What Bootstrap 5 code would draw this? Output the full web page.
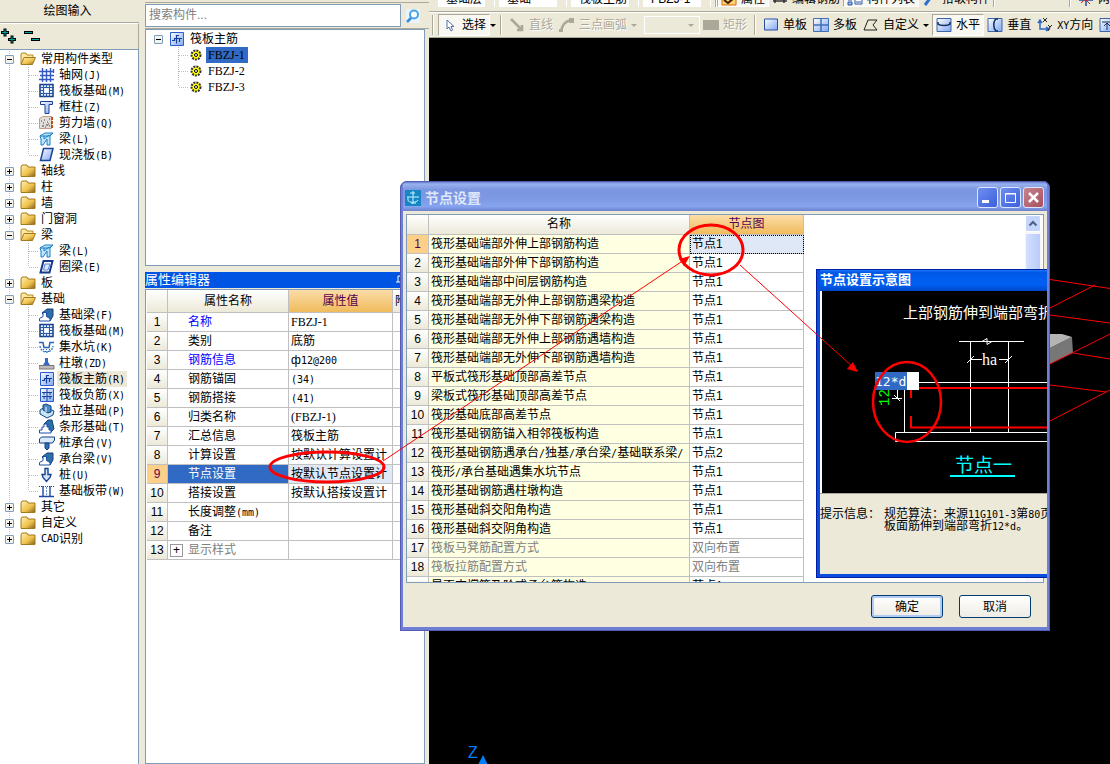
<!DOCTYPE html>
<html lang="zh-CN">
<head>
<meta charset="utf-8">
<meta name="viewport" content="width=device-width, initial-scale=1">
<title>节点设置</title>
<link href="https://cdn.jsdelivr.net/npm/bootstrap@5.3.0/dist/css/bootstrap.min.css" rel="stylesheet">
<script src="https://cdn.jsdelivr.net/npm/bootstrap@5.3.0/dist/js/bootstrap.bundle.min.js"></script>
<style>
:root{--face:#ece9d8;--edge:#7f9db9;--line:#c0c0c0;--shade:#aca899}
body{font-family:"Liberation Sans","Noto Sans CJK SC",sans-serif;font-size:12px;line-height:16px;color:#000;background:var(--face)}
button,input,select{font:inherit;color:inherit}
.m{font-family:"DejaVu Sans Mono","Noto Sans CJK SC",monospace;font-size:10px;line-height:10px}
.sf{font-family:"Liberation Serif",serif}
.ic{width:16px;height:16px;flex:none;display:block}
/* component type panel */
.side{width:139px;flex:none}
.side-head{height:23px;line-height:22px;border-bottom:1px solid var(--shade)}
.side-tools{height:26px;border-top:1px solid #fff;border-right:1px solid var(--shade)}
.side-tools svg{width:44px;height:24px}
.tree{background:#fff;border:1px solid var(--edge);border-left:0;border-bottom:0}
.tree ul,.parts ul{list-style:none;margin:0;padding:0}
.tree>ul{padding-top:1px}
.node{height:16px;display:flex;align-items:center;white-space:nowrap}
.tg{width:9px;height:9px;flex:none;border:1px solid var(--edge);border-radius:1px;background:#f4f3ee;position:relative;padding:0}
.tg::before,.tg.shut::after{content:"";position:absolute;left:1px;top:3px;width:5px;height:1px;background:#000}
.tg.shut::after{left:3px;top:1px;width:1px;height:5px}
.root{background:repeating-linear-gradient(#bbb 0 1px,transparent 1px 2px) 9px 0/1px 100% no-repeat}
.root:last-child{background-size:1px 8px}
.root>.node{padding-left:5px}
.root>.node .ic{margin:0 5px 0 6px}
.kid{padding-left:39px;background:repeating-linear-gradient(#bbb 0 1px,transparent 1px 2px) 28px 0/1px 100% no-repeat,repeating-linear-gradient(90deg,#bbb 0 1px,transparent 1px 2px) 29px 8px/9px 1px no-repeat}
.kid:last-child{background-size:1px 8px,9px 1px}
.kid .ic{margin-right:2px}
.kid span{padding:0 2px}
.kid .m{padding:0}
.kid .on{background:var(--face)}
/* middle column */
.mid{width:284px;flex:none;margin-left:6px}
.mid-top{height:3px;border-bottom:1px solid var(--shade)}
.find{height:26px;border-bottom:1px solid var(--shade);padding:1px 0}
.find input{width:256px;height:23px;border:1px solid var(--edge);padding:0 3px 2px;border-radius:0;background:#fff}
.find input::placeholder{color:#808080}
.find button{border:0;background:none;padding:0 4px}
.parts{height:237px;border:1px solid var(--edge);background:#fff;margin-right:4px;padding:1px 0 0 8px}
.parts .ic{margin:0 1px 0 6px}
.parts .kid{padding-left:34px;background-position:24px 0,25px 8px}
.parts .kid .ic{margin:0 2px 0 0}
.parts .kid span{padding:0 3px 0 2px}
.parts .kid .on{background:#316ac5}
.cap{height:16px;line-height:16px;font-size:13px;background:#0054e3;color:#fff;margin:6px 4px 0 0}
.prop{border:1px solid var(--edge);background:#fff;margin:1px 4px 0 0;padding-left:1px}
/* grids */
.sheet{border-collapse:separate;border-spacing:0;table-layout:fixed;margin:0}
.sheet th,.sheet td{height:19px;padding:0 2px;line-height:18px;border:solid var(--line);border-width:0 1px 1px 0;font-weight:400;white-space:nowrap;overflow:hidden;text-align:left}
.sheet thead th,.sheet tbody th{background:linear-gradient(#fff,#ece9d8);text-align:center}
.sheet thead th.hot{background:linear-gradient(#fbdca8,#f0bc5c);color:#5a0050}
.sheet tbody tr.cur th{background:#fdd08a;color:#5a0050}
.gray{color:#808080}
.prop .sheet{width:277px}
.prop .sheet thead th{height:23px}
.prop td:nth-child(2){padding-left:20px}
.prop .cur td:nth-child(2){background:#316ac5;color:#fff}
.prop .cur td:nth-child(3){background:#dfe8f6}
.blue{color:#00f}
.prop td.grp{padding-left:2px}
.plus{width:13px;height:13px;flex:none;border:1px solid #999;background:#fff;line-height:10px;padding:0;margin-right:5px;color:#000}
/* toolbars */
.bar1{height:12px;overflow:hidden;border-bottom:1px solid var(--shade);align-items:flex-end;padding:0 0 4px 9px;white-space:nowrap}
.bar1>*{flex:none}
.bar1 select{appearance:none;border:0;border-radius:0;height:16px;padding:0 8px;line-height:16px;margin-right:4px;background:linear-gradient(var(--face),var(--face)) right/9px 100% no-repeat #fff;border-right:1px solid #fff}
.bar1 .tb{height:16px}
.bar2{height:26px;border-top:1px solid #fff;border-bottom:1px solid var(--shade);padding:1px 0 1px 3px;white-space:nowrap;overflow:hidden}
.tb{border:0;background:none;padding:0 3px;height:22px;display:flex;align-items:center;gap:4px;flex:none}
.tb.down{background:#f8f7f1;border:1px solid var(--shade);border-color:var(--shade) #fff #fff var(--shade)}
.tb:disabled{color:var(--shade);text-shadow:1px 1px #fff}
.caret{width:0;height:0;border:3px solid transparent;border-top-color:currentColor;border-bottom:0;flex:none}
.vr2{width:2px;height:20px;flex:none;border-left:1px solid var(--shade);background:#fff}
.gap-bars{width:74px;background:var(--face)}
.bar2 select{appearance:none;width:56px;height:18px;flex:none;border:1px solid #fff;border-radius:0;background:var(--face)}
.combo{position:relative}
.combo .caret{position:absolute;right:6px;top:8px;color:var(--shade)}
.view{background:#000;min-height:0}
.view svg{position:absolute;left:0;top:0;width:100%;height:100%}
/* dialogs */
.dlg{position:absolute;left:400px;top:181px;width:650px;height:450px;background:var(--face);border:solid #6f7fd6;border-width:0 3px 4px;border-radius:7px 7px 0 0;outline:1px solid #555cb4;outline-offset:-1px;z-index:5;overflow:hidden}
.dlg-title{height:30px;background:linear-gradient(#4f62c0 0,#98b2ee 10%,#7b95e0 30%,#7e9ae4 60%,#86a3ee 85%,#6c80cc);color:#dfe8fb;font-size:14px;font-weight:700;padding:3px 3px 0 2px}
.wins{gap:2px}
.wb{width:21px;height:21px;border:1px solid #dde6fb;border-radius:3px;background:linear-gradient(135deg,#6f8fee,#3c5fdc);padding:0}
.wb.x{background:linear-gradient(135deg,#c5848f,#a9505f)}
.wb svg{width:19px;height:19px;display:block}
.well{height:369px;margin:3px 3px 0;border:1px solid var(--edge);background:#fff;overflow:hidden}
.well .sheet{width:397px;flex:none}
.well .sheet thead th{height:20px;line-height:19px}
.well td:nth-child(2){background:#ffffe1}
.well .cur td:nth-child(3){background:#dfe8f6;outline:1px dotted #000;outline-offset:-1px}
.sb{width:17px;margin-right:1px;background:#f6f6fb;flex:none}
.sb button{width:16px;height:17px;border:1px solid #fff;border-radius:2px;background:#c6d5fb;display:block;padding:0}
.sb div{width:14px;height:300px;margin:2px 1px 0;background:linear-gradient(90deg,#d3e0ff,#b9cbf8)}
.ok{width:72px;height:23px;border:1px solid #003c74;border-radius:3px;background:linear-gradient(#fff,#eeece4);padding:0}
.ok.def{box-shadow:inset 0 0 0 2px #b3caf2}
.tip-win{position:absolute;left:413px;top:88px;width:260px;height:309px;border:solid #0a4be0;border-width:0 0 4px 4px;outline:1px solid #001ea0;outline-offset:-1px;background:var(--face)}
.tip-title{height:22px;line-height:22px;font-size:13px;font-weight:700;color:#fff;background:linear-gradient(#2a86ff,#0058e6 15%,#0060f4 70%,#0048c8);white-space:nowrap}
.sketch{height:202px;background:#000;border-left:2px solid #fff;position:relative}
.sketch svg{display:block;width:240px;height:200px}
.sketch input{position:absolute;left:53px;top:81px;width:44px;height:18px;border:0;border-radius:0;padding:0;background:linear-gradient(90deg,#316ac5 32px,#fff 32px);color:#fff;font:13px "DejaVu Sans Mono",monospace}
.hint{line-height:12px;padding-top:14px;white-space:nowrap;border-top:1px solid var(--shade)}
.marks{position:absolute;left:0;top:0;width:100%;height:100%;z-index:9;pointer-events:none}
</style>
</head>
<body>
<svg class="position-absolute" width="0" height="0" aria-hidden="true">
<defs>
<linearGradient id="gold" x2="1" y2="1"><stop stop-color="#fff0b0"/><stop offset=".6" stop-color="#eec04a"/><stop offset="1" stop-color="#80601c"/></linearGradient>
<linearGradient id="sky" x2="1" y2="1"><stop stop-color="#fff"/><stop offset="1" stop-color="#7fa6f4"/></linearGradient>
</defs>
<symbol id="fold" viewBox="0 0 16 16"><path d="M1 4l1-2h5l1 2h7v9.500H1z" fill="url(#gold)" stroke="#a57a1c"/></symbol>
<symbol id="open" viewBox="0 0 16 16"><path d="M1 13V3l1-1h4l1 2h6v3" fill="#ffe79a" stroke="#b08828"/><path d="M1 13.500L4 6.500h11.500L12.500 13.500z" fill="url(#gold)" stroke="#a57a1c"/></symbol>
<symbol id="net" viewBox="0 0 16 16"><path d="M0 4.500h15M1 8.500h14M0 12.500h15M3.500 1v14M7.500 2v13M11.500 1v14M14.500 2v4" stroke="#3558c0" stroke-width="1.400"/></symbol>
<symbol id="raft" viewBox="0 0 16 16"><path d="M1 1.500h13v12H1z" fill="#e4eefc" stroke="#123c86" stroke-width="1.500"/><path d="M4.500 1v13M10.500 1v13M1 4.500h14M1 10.500h14M7.500 1v3M7.500 11v3M1 7.500h3M11 7.500h3" stroke="#2a5aa4"/><path d="M6 6h3v3H6z" fill="#fff"/></symbol>
<symbol id="colm" viewBox="0 0 16 16"><path d="M1.500 2.500h12v3h-3.500v9H6v-9H1.500z" fill="url(#sky)" stroke="#1c3f98"/></symbol>
<symbol id="wall" viewBox="0 0 16 16"><path d="M.5 3.500l3-2h9v12h-12z" fill="#e2ddd8" stroke="#c49a88"/><path d="M13 2v12" stroke="#c05010" stroke-width="2" stroke-dasharray="3 1"/><path d="M2 6h1M5 5h1M8 7h1M4 8h1M7 10h2M3 11h2M10 4h1M10 11h1M6 12h1M9 9h1" stroke="#444"/></symbol>
<symbol id="beam" viewBox="0 0 16 16"><path d="M1 5l5-3h8l-3 3v9H8V8l-4 6H2V8z" fill="#bfe4fa" stroke="#1b7fc4"/><path d="M1 5h9l4-3M5 5v3l5-4" fill="none" stroke="#1b7fc4"/></symbol>
<symbol id="slab" viewBox="0 0 16 16"><path d="M4.500 1.500h9.500l-3 12H1.500z" fill="url(#sky)" stroke="#1c4496" stroke-width="1.500"/></symbol>
<symbol id="ring" viewBox="0 0 16 16"><path d="M4.500 2h9l-3 11.500H1.500z" fill="#fff" stroke="#15398c" stroke-width="2"/><path d="M6 5h5l-2 6H4.500z" fill="#dce8ff" stroke="#5b83d8"/></symbol>
<symbol id="fbeam" viewBox="0 0 16 16"><path d="M3 6l5-4 6 0v7l-3 5z" fill="#2d6fa8" stroke="#123f78"/><path d="M.5 14v-2.500L4 9.500V5.500h3.500v4L11 11.500V14z" fill="#fff" stroke="#1b4fa8"/></symbol>
<symbol id="pit" viewBox="0 0 16 16"><path d="M0 3.500h4l1 5h5l1-5h4" fill="none" stroke="#2b64b4" stroke-width="1.500"/><path d="M1 7c1 8 12 8 13 0" fill="none" stroke="#3f82d4" stroke-width="1.500" stroke-dasharray="2 1"/><path d="M4 10.500h8M6 12.500h4" stroke="#2b64b4" stroke-dasharray="1 2"/></symbol>
<symbol id="pier" viewBox="0 0 16 16"><path d="M0 10.500h15V14H0z" fill="#bbb" stroke="#777"/><path d="M4 10l2-3h3l2 3zM6 7V3h3v4" fill="#3468c8"/></symbol>
<symbol id="main" viewBox="0 0 16 16"><path d="M1.500 1.500h13v13h-13z" fill="url(#sky)" stroke="#2a5cd0"/><path d="M10 4.500H7.500v8M3 9.500h2.500v-2h7.500M10.500 7v4" fill="none" stroke="#123f98" stroke-width="1.200"/></symbol>
<symbol id="neg" viewBox="0 0 16 16"><path d="M1.500 1.500h13v13h-13z" fill="url(#sky)" stroke="#2a5cd0"/><path d="M8 1.500v13M3 5.500h10M3 9.500h10M5 5v3M11 5v3M5 9v3M11 9v3" fill="none" stroke="#123f98"/></symbol>
<symbol id="iso" viewBox="0 0 16 16"><path d="M1 7l5-3 9 4-1 4-6 3-7-4z" fill="#c8e4f6" stroke="#17457e"/><path d="M4 2l3-1 5 2v6l-3 1-5-3z" fill="#4b8bc8" stroke="#17457e"/><path d="M7 4v5" stroke="#fff"/></symbol>
<symbol id="strip" viewBox="0 0 16 16"><path d="M5 5l4-4h4l2 9-4 4z" fill="#2d6fa8" stroke="#123f78"/><path d="M.5 14v-3H3V8h2V5h3v3h2v3h2v3z" fill="#fff" stroke="#1b4fa8"/></symbol>
<symbol id="cap" viewBox="0 0 16 16"><path d="M.5 4l2-2h13v3l-2 3H.5z" fill="#d6ecfa" stroke="#173f82"/><path d="M6 8h4v5l-2 2-2-2z" fill="#2f6cb4" stroke="#173f82"/></symbol>
<symbol id="pile" viewBox="0 0 16 16"><path d="M6 1.500h3v6h3l-1 3-3.500 4-3.500-4-1-3h3z" fill="#d4e6fc" stroke="#16448c" stroke-width="1.400"/></symbol>
<symbol id="band" viewBox="0 0 16 16"><path d="M0 3.500h15" stroke="#2048a0" stroke-dasharray="1 1"/><path d="M4 3v10M11 3v10M0 13.500h15" stroke="#2048a0" stroke-width="1.400"/><path d="M7.500 4v9" stroke="#6f94d8" stroke-dasharray="2 1"/></symbol>
<symbol id="gear" viewBox="0 0 16 16"><circle cx="8" cy="8" r="4.500" fill="#ff0" stroke="#333" stroke-width="2" stroke-dasharray="2 1"/><circle cx="8" cy="8" r="1.500" fill="#fff" stroke="#000"/></symbol>
</svg>

<div class="d-flex vh-100 position-relative overflow-hidden">
<aside class="side d-flex flex-column">
  <div class="side-head text-center pe-1">绘图输入</div>
  <div class="side-tools"><svg viewBox="0 0 44 24"><path d="M1 8.500h8M5 4.500v8M8 15.500h8M12 11.500v8M24 8.500h9M31 15.500h9" stroke="#000" stroke-width="3"/><path d="M2 8.500h6M5 5.500v6M9 15.500h6M12 12.500v6M25 8.500h7M32 15.500h7" stroke="#00a09a"/></svg></div>
  <nav class="tree flex-grow-1">
  <ul>
    <li class="root"><div class="node"><button class="tg" aria-label="折叠"></button><svg class="ic"><use href="#open"/></svg>常用构件类型</div>
      <ul>
        <li class="node kid"><svg class="ic"><use href="#net"/></svg><span>轴网<span class="m">(J)</span></span></li>
        <li class="node kid"><svg class="ic"><use href="#raft"/></svg><span>筏板基础<span class="m">(M)</span></span></li>
        <li class="node kid"><svg class="ic"><use href="#colm"/></svg><span>框柱<span class="m">(Z)</span></span></li>
        <li class="node kid"><svg class="ic"><use href="#wall"/></svg><span>剪力墙<span class="m">(Q)</span></span></li>
        <li class="node kid"><svg class="ic"><use href="#beam"/></svg><span>梁<span class="m">(L)</span></span></li>
        <li class="node kid"><svg class="ic"><use href="#slab"/></svg><span>现浇板<span class="m">(B)</span></span></li>
      </ul></li>
    <li class="root"><div class="node"><button class="tg shut" aria-label="展开"></button><svg class="ic"><use href="#fold"/></svg>轴线</div></li>
    <li class="root"><div class="node"><button class="tg shut" aria-label="展开"></button><svg class="ic"><use href="#fold"/></svg>柱</div></li>
    <li class="root"><div class="node"><button class="tg shut" aria-label="展开"></button><svg class="ic"><use href="#fold"/></svg>墙</div></li>
    <li class="root"><div class="node"><button class="tg shut" aria-label="展开"></button><svg class="ic"><use href="#fold"/></svg>门窗洞</div></li>
    <li class="root"><div class="node"><button class="tg" aria-label="折叠"></button><svg class="ic"><use href="#open"/></svg>梁</div>
      <ul>
        <li class="node kid"><svg class="ic"><use href="#beam"/></svg><span>梁<span class="m">(L)</span></span></li>
        <li class="node kid"><svg class="ic"><use href="#ring"/></svg><span>圈梁<span class="m">(E)</span></span></li>
      </ul></li>
    <li class="root"><div class="node"><button class="tg shut" aria-label="展开"></button><svg class="ic"><use href="#fold"/></svg>板</div></li>
    <li class="root"><div class="node"><button class="tg" aria-label="折叠"></button><svg class="ic"><use href="#open"/></svg>基础</div>
      <ul>
        <li class="node kid"><svg class="ic"><use href="#fbeam"/></svg><span>基础梁<span class="m">(F)</span></span></li>
        <li class="node kid"><svg class="ic"><use href="#raft"/></svg><span>筏板基础<span class="m">(M)</span></span></li>
        <li class="node kid"><svg class="ic"><use href="#pit"/></svg><span>集水坑<span class="m">(K)</span></span></li>
        <li class="node kid"><svg class="ic"><use href="#pier"/></svg><span>柱墩<span class="m">(ZD)</span></span></li>
        <li class="node kid"><svg class="ic"><use href="#main"/></svg><span class="on">筏板主筋<span class="m">(R)</span></span></li>
        <li class="node kid"><svg class="ic"><use href="#neg"/></svg><span>筏板负筋<span class="m">(X)</span></span></li>
        <li class="node kid"><svg class="ic"><use href="#iso"/></svg><span>独立基础<span class="m">(P)</span></span></li>
        <li class="node kid"><svg class="ic"><use href="#strip"/></svg><span>条形基础<span class="m">(T)</span></span></li>
        <li class="node kid"><svg class="ic"><use href="#cap"/></svg><span>桩承台<span class="m">(V)</span></span></li>
        <li class="node kid"><svg class="ic"><use href="#fbeam"/></svg><span>承台梁<span class="m">(V)</span></span></li>
        <li class="node kid"><svg class="ic"><use href="#pile"/></svg><span>桩<span class="m">(U)</span></span></li>
        <li class="node kid"><svg class="ic"><use href="#band"/></svg><span>基础板带<span class="m">(W)</span></span></li>
      </ul></li>
    <li class="root"><div class="node"><button class="tg shut" aria-label="展开"></button><svg class="ic"><use href="#fold"/></svg>其它</div></li>
    <li class="root"><div class="node"><button class="tg shut" aria-label="展开"></button><svg class="ic"><use href="#fold"/></svg>自定义</div></li>
    <li class="root"><div class="node"><button class="tg shut" aria-label="展开"></button><svg class="ic"><use href="#fold"/></svg><span class="m">CAD</span>识别</div></li>
  </ul>
  </nav>
</aside>

<section class="mid d-flex flex-column">
  <div class="mid-top"></div>
  <div class="find d-flex align-items-center"><input type="text" placeholder="搜索构件..." aria-label="搜索构件"><button aria-label="搜索"><svg class="ic" viewBox="0 0 16 16"><path d="M1 1h14v14H1z" fill="#e8f4fd"/><circle cx="9" cy="6.500" r="4" fill="#fff" stroke="#4aa3e4" stroke-width="2"/><path d="M6 10l-4 4" stroke="#3b8ad0" stroke-width="2.500"/></svg></button></div>
  <div class="parts">
    <div class="node"><button class="tg" aria-label="折叠"></button><svg class="ic"><use href="#main"/></svg><span class="ps-1">筏板主筋</span></div>
    <ul>
      <li class="node kid sf"><svg class="ic"><use href="#gear"/></svg><span class="on">FBZJ-1</span></li>
      <li class="node kid sf"><svg class="ic"><use href="#gear"/></svg><span>FBZJ-2</span></li>
      <li class="node kid sf"><svg class="ic"><use href="#gear"/></svg><span>FBZJ-3</span></li>
    </ul>
  </div>
  <div class="cap d-flex justify-content-between"><span>属性编辑器</span><svg class="ic me-3" viewBox="0 0 16 16"><path d="M3 10h8M5 10V4h5v6M7.500 10v4" fill="none" stroke="#fff"/></svg></div>
  <div class="prop flex-grow-1">
    <table class="sheet">
      <colgroup><col style="width:21px"><col style="width:121px"><col style="width:104px"><col></colgroup>
      <thead><tr><th></th><th>属性名称</th><th class="hot">属性值</th><th class="text-start">附加</th></tr></thead>
      <tbody>
        <tr><th>1</th><td class="blue">名称</td><td class="sf">FBZJ-1</td><td></td></tr>
        <tr><th>2</th><td>类别</td><td>底筋</td><td></td></tr>
        <tr><th>3</th><td class="blue">钢筋信息</td><td>ф<span class="m">12@200</span></td><td></td></tr>
        <tr><th>4</th><td>钢筋锚固</td><td><span class="m">(34)</span></td><td></td></tr>
        <tr><th>5</th><td>钢筋搭接</td><td><span class="m">(41)</span></td><td></td></tr>
        <tr><th>6</th><td>归类名称</td><td class="sf">(FBZJ-1)</td><td></td></tr>
        <tr><th>7</th><td>汇总信息</td><td>筏板主筋</td><td></td></tr>
        <tr><th>8</th><td>计算设置</td><td>按默认计算设置计</td><td></td></tr>
        <tr class="cur"><th>9</th><td>节点设置</td><td>按默认节点设置计</td><td></td></tr>
        <tr><th>10</th><td>搭接设置</td><td>按默认搭接设置计</td><td></td></tr>
        <tr><th>11</th><td>长度调整<span class="m">(mm)</span></td><td></td><td></td></tr>
        <tr><th>12</th><td>备注</td><td></td><td></td></tr>
        <tr><th>13</th><td class="grp gray"><div class="d-flex align-items-center"><button class="plus">+</button>显示样式</div></td><td></td><td></td></tr>
      </tbody>
    </table>
  </div>
</section>

<main class="d-flex flex-column flex-grow-1 overflow-hidden">
  <div class="bar1 d-flex">
    <select aria-label="楼层" style="width:57px"><option>基础层</option></select>
    <select aria-label="类别" style="width:68px"><option>基础</option></select>
    <select aria-label="构件类型" style="width:68px"><option>筏板主筋</option></select>
    <select aria-label="构件" style="width:68px"><option>FBZJ-1</option></select>
    <span class="vr2"></span>
    <button class="tb down"><svg class="ic" viewBox="0 0 16 16"><path d="M1 1h14v13H1z" fill="#ffd070" stroke="#d07010"/><path d="M3 9l4 3 6-5" fill="none" stroke="#402000" stroke-width="2"/></svg>属性</button>
    <button class="tb"><svg class="ic" viewBox="0 0 16 16"><path d="M1 10h14M3 7v5M12 7v5" stroke="#333" stroke-width="1.500"/></svg>编辑钢筋</button>
    <button class="tb down"><svg class="ic" viewBox="0 0 16 16"><path d="M8 4h7v9H8z" fill="#fff" stroke="#2c56a8"/><path d="M1 6h4v3H1zM1 11h4v3H1zM9 8h5M9 11h5" fill="#9ab8e8" stroke="#2c56a8"/></svg>构件列表</button>
    <button class="tb"><svg class="ic" viewBox="0 0 16 16"><path d="M3 14L12 2" stroke="#2a6fd0" stroke-width="3"/></svg>拾取构件</button>
    <span class="vr2"></span><span class="gap-bars"></span><span class="vr2 me-1"></span>
    <button class="tb"><svg class="ic" viewBox="0 0 16 16"><path d="M1 9h14M8 2v13" stroke="#2448a0" stroke-width="1.500"/><path d="M2 3l10 10M12 4L3 12" stroke="#d02020"/></svg>两点</button>
  </div>
  <div class="bar2 d-flex align-items-center">
    <span class="vr2 me-1"></span>
    <button class="tb down"><svg class="ic" viewBox="0 0 16 16"><path d="M5 3v9l2-2 2 4 1.500-1L9 9.500h3z" fill="#fff" stroke="#5470a8"/></svg>选择</button>
    <span class="caret me-1"></span><span class="vr2 me-1"></span>
    <button class="tb" disabled><svg class="ic" viewBox="0 0 16 16"><path d="M2 2l10 10M8 13h5V8" fill="none" stroke="#aca899" stroke-width="2.500"/></svg>直线</button>
    <button class="tb" disabled><svg class="ic" viewBox="0 0 16 16"><path d="M2 15C3 8 6 4 12 3" fill="none" stroke="#aca899" stroke-width="2.500"/><path d="M10 1h5v5h-5zM0 12h4v3H0z" fill="#aca899"/></svg>三点画弧<span class="caret"></span></button>
    <span class="combo d-flex ms-1"><select disabled aria-label="画弧方式"><option></option></select><span class="caret"></span></span>
    <button class="tb" disabled><svg class="ic" viewBox="0 0 16 16"><path d="M0 3h16v10H0z" fill="#aca899"/></svg>矩形</button>
    <span class="vr2 ms-1 me-1"></span>
    <button class="tb"><svg class="ic" viewBox="0 0 16 16"><path d="M1.500 2h13v11h-13z" fill="url(#sky)" stroke="#2850a0"/></svg>单板</button>
    <button class="tb"><svg class="ic" viewBox="0 0 16 16"><path d="M.5 1.500h15v13H.5z" fill="url(#sky)" stroke="#4070b0"/><path d="M8 1v14M0 8h16" stroke="#4070b0" stroke-width="1.500"/></svg>多板</button>
    <button class="tb"><svg class="ic" viewBox="0 0 16 16"><path d="M5 3h9l-4 5 4 5H1z" fill="none" stroke="#222"/></svg>自定义<span class="caret"></span></button>
    <button class="tb down"><svg class="ic" viewBox="0 0 16 16"><path d="M1 1.500h14v13H1z" fill="url(#sky)" stroke="#3c64a8"/><path d="M2 5v2c2 2 10 2 12 0V5" fill="none" stroke="#10305c" stroke-width="1.500"/></svg>水平</button>
    <button class="tb"><svg class="ic" viewBox="0 0 16 16"><path d="M1 1.500h14v13H1z" fill="url(#sky)" stroke="#3c64a8"/><path d="M11 2H9C6 4 6 11 9 14h2" fill="none" stroke="#10305c" stroke-width="1.500"/></svg>垂直</button>
    <button class="tb"><svg class="ic" viewBox="0 0 16 16"><path d="M3 4v8h8M1 6l2-3 2 3M9 10l3 2-3 2" fill="none" stroke="#2a66c8" stroke-width="1.500"/><path d="M6 1l4 4M10 1L6 5M11 8l2 2 2-2M13 10l-2 4" fill="none" stroke="#222"/></svg><span><span class="m">XY</span>方向</span></button>
    <button class="tb" aria-label="其他方向"><svg class="ic" viewBox="0 0 16 16"><path d="M1 1.500h14v13H1z" fill="url(#sky)" stroke="#3c64a8"/><path d="M3 5h10M8 6v7M5 9l3-3 3 3" fill="none" stroke="#10305c"/></svg></button>
  </div>
  <div class="view flex-grow-1 position-relative overflow-hidden">
    <svg>
      <path d="M621 310l22-11 1 16-23 11z" fill="#777"/><path d="M621 296h12l10 3-22 11z" fill="#b4b4b4"/>
      <path d="M621 241.500l60 9M621 270l45-23M621 277l60 8M621 326l60-30M644 315l37 6M621 347l56 7M621 383l60-31" stroke="#f00" fill="none"/>
      <text x="39" y="720" font-size="16" fill="#0080ff">Z</text><path d="M54 717l5 10h-10z" fill="#0080ff"/>
    </svg>
  </div>
</main>

<section class="dlg" role="dialog" aria-label="节点设置">
  <div class="dlg-title d-flex align-items-center">
    <svg class="ic" viewBox="0 0 16 16"><path d="M0 0h16v16H0z" fill="#1686c4"/><path d="M8 1v13M2 7h12M5 3h5M3 7v3c0 3 9 3 10 0M6 13h5" fill="none" stroke="#bff4ff"/></svg>
    <span class="ms-1 flex-grow-1">节点设置</span>
    <div class="wins d-flex">
      <button class="wb" aria-label="最小化"><svg viewBox="0 0 19 19"><path d="M4 13.500h7" stroke="#fff" stroke-width="3"/></svg></button>
      <button class="wb" aria-label="最大化"><svg viewBox="0 0 19 19"><path d="M4.500 5.500h10v9h-10zM4 6h11" fill="none" stroke="#fff"/></svg></button>
      <button class="wb x" aria-label="关闭"><svg viewBox="0 0 19 19"><path d="M5 5l9 9M14 5l-9 9" stroke="#fff" stroke-width="2.500"/></svg></button>
    </div>
  </div>
  <div class="well d-flex justify-content-between">
    <table class="sheet">
      <colgroup><col style="width:22px"><col style="width:261px"><col style="width:114px"></colgroup>
      <thead><tr><th></th><th>名称</th><th class="hot">节点图</th></tr></thead>
      <tbody>
        <tr class="cur"><th>1</th><td>筏形基础端部外伸上部钢筋构造</td><td>节点1</td></tr>
        <tr><th>2</th><td>筏形基础端部外伸下部钢筋构造</td><td>节点1</td></tr>
        <tr><th>3</th><td>筏形基础端部中间层钢筋构造</td><td>节点1</td></tr>
        <tr><th>4</th><td>筏形基础端部无外伸上部钢筋遇梁构造</td><td>节点1</td></tr>
        <tr><th>5</th><td>筏形基础端部无外伸下部钢筋遇梁构造</td><td>节点1</td></tr>
        <tr><th>6</th><td>筏形基础端部无外伸上部钢筋遇墙构造</td><td>节点1</td></tr>
        <tr><th>7</th><td>筏形基础端部无外伸下部钢筋遇墙构造</td><td>节点1</td></tr>
        <tr><th>8</th><td>平板式筏形基础顶部高差节点</td><td>节点1</td></tr>
        <tr><th>9</th><td>梁板式筏形基础顶部高差节点</td><td>节点1</td></tr>
        <tr><th>10</th><td>筏形基础底部高差节点</td><td>节点1</td></tr>
        <tr><th>11</th><td>筏形基础钢筋锚入相邻筏板构造</td><td>节点1</td></tr>
        <tr><th>12</th><td>筏形基础钢筋遇承台<span class="m">/</span>独基<span class="m">/</span>承台梁<span class="m">/</span>基础联系梁<span class="m">/</span></td><td>节点2</td></tr>
        <tr><th>13</th><td>筏形<span class="m">/</span>承台基础遇集水坑节点</td><td>节点1</td></tr>
        <tr><th>14</th><td>筏形基础钢筋遇柱墩构造</td><td>节点1</td></tr>
        <tr><th>15</th><td>筏形基础斜交阳角构造</td><td>节点1</td></tr>
        <tr><th>16</th><td>筏形基础斜交阴角构造</td><td>节点1</td></tr>
        <tr class="gray"><th class="text-black">17</th><td>筏板马凳筋配置方式</td><td>双向布置</td></tr>
        <tr class="gray"><th class="text-black">18</th><td>筏板拉筋配置方式</td><td>双向布置</td></tr>
        <tr><th></th><td>是否支撑筋及阶式承台筋构造</td><td>节点1</td></tr>
      </tbody>
    </table>
    <div class="sb"><button aria-label="向上滚动"><svg class="ic" viewBox="0 0 16 16"><path d="M3.500 9.500L7 6l3.500 3.500" fill="none" stroke="#4d6185" stroke-width="2"/></svg></button><div></div></div>
  </div>
  <div class="d-flex justify-content-end gap-3 pe-3 pt-2 mt-1"><button class="ok def">确定</button><button class="ok">取消</button></div>

  <div class="tip-win" role="dialog" aria-label="节点设置示意图">
    <div class="tip-title">节点设置示意图</div>
    <div class="sketch">
      <svg viewBox="0 0 240 200">
        <g fill="none" stroke="#fff"><path d="M137 50.500h65M148.500 50v91M186.500 50v91M160 50.500l5-3v6l5-3M149 68.500h11M177 68.500h9M145 72l7-7M183 72l7-7M97 91.500h143M82.500 99v42M240 141.500H73.500v9H240M75.500 99v8M70 107.500h10M72 104l6 6"/></g>
        <path d="M97 97h143M89 99v8M89 125v11.500h151" fill="none" stroke="#f00" stroke-width="2"/>
        <text x="81" y="27" font-size="15" fill="#fff" font-family="Noto Sans CJK SC">上部钢筋伸到端部弯折</text>
        <text x="160" y="74" font-size="16" fill="#fff" font-family="Liberation Serif">ha</text>
        <text transform="translate(67 115) rotate(-90)" font-size="14" fill="#0f0" font-family="Liberation Mono">12</text>
        <text x="133" y="181" font-size="19" fill="#0ff" font-family="Noto Sans CJK SC">节点一</text>
        <path d="M128 185h65" stroke="#0ff" stroke-width="2"/>
      </svg>
      <input type="text" value="12*d" aria-label="弯折长度">
    </div>
    <div class="hint d-flex"><span>提示信息：</span><span class="ms-1">规范算法：来源<span class="m">11G101-3</span>第<span class="m">80</span>页<br>板面筋伸到端部弯折<span class="m">12*d</span>。</span></div>
  </div>
</section>

<svg class="marks" aria-hidden="true">
  <g fill="none" stroke="#f00"><ellipse cx="327" cy="467" rx="57" ry="15" stroke-width="3"/><ellipse cx="711" cy="250" rx="32" ry="25" stroke-width="3"/><ellipse cx="907" cy="402" rx="34" ry="40" stroke-width="2.500"/><path d="M383 461L684 260M740 265L854 368"/></g>
  <path d="M690 256l-11 3 5 7zM858 372l-11-3 6-7z" fill="#f00"/>
</svg>
</div>
</body>
</html>
